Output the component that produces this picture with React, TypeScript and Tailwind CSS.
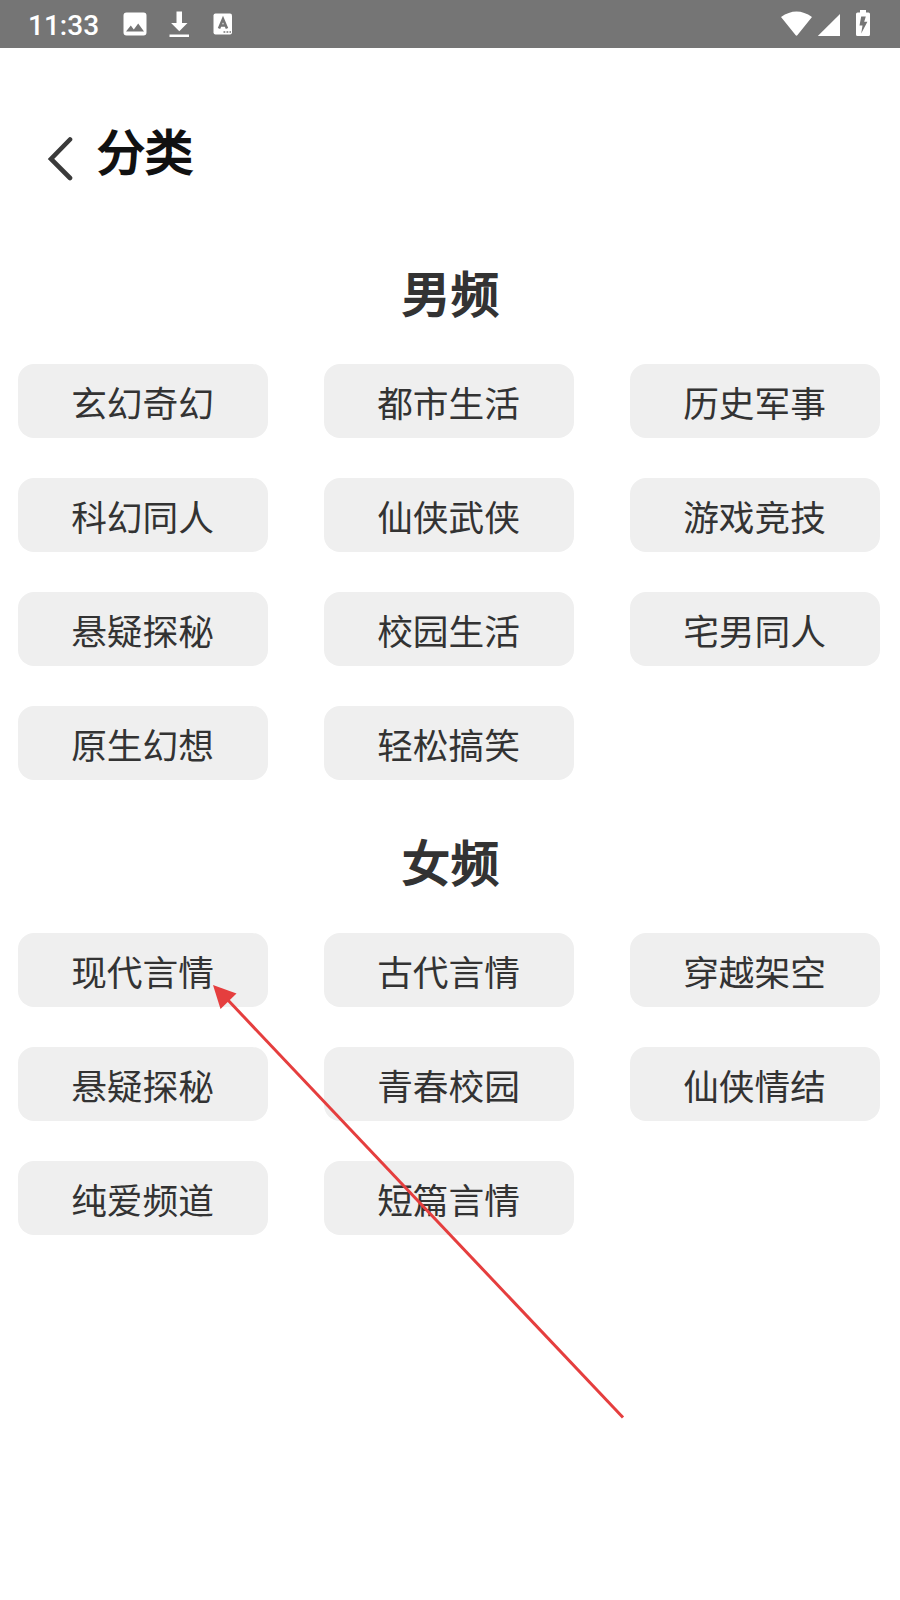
const channels = [
  {
    title: '男频',
    items: ['玄幻奇幻', '都市生活', '历史军事', '科幻同人', '仙侠武侠', '游戏竞技', '悬疑探秘', '校园生活', '宅男同人', '原生幻想', '轻松搞笑'],
  },
  {
    title: '女频',
    items: ['现代言情', '古代言情', '穿越架空', '悬疑探秘', '青春校园', '仙侠情结', '纯爱频道', '短篇言情'],
  },
];

function StatusBar() {
  return (
    <div className="flex h-12 items-center justify-between bg-[#757575] pl-7 text-white">
      <div className="flex items-center">
        <span className="w-[94px] pt-[3px] font-['Roboto'] text-[28px] leading-[46px] font-medium">11:33</span>
        <svg width="115" height="48" viewBox="122 0 115 48" fill="currentColor">
          <path fillRule="evenodd" d="M126.500 12.500h17a3 3 0 0 1 3 3v17a3 3 0 0 1-3 3h-17a3 3 0 0 1-3-3v-17a3 3 0 0 1 3-3zM126 31.500h18l-5.800-8-4.400 6-3-4z" />
          <path d="M176.500 11.500h5.500v11.500h5.500l-8.200 8.200-8.200-8.200h5.400zM169.500 34.500h19.500v2.500h-19.500z" />
          <rect x="213.500" y="13.500" width="18.500" height="21" rx="2" />
          <path d="M219 28.500l4-9.500 4 9.500M220.400 25.500h5.200" fill="none" stroke="#757575" strokeWidth="2.600" />
          <path d="M223.500 32h1.800M226.500 32h1.800M229.500 32h1.500" stroke="#757575" strokeWidth="1.600" />
        </svg>
      </div>
      <svg width="120" height="48" viewBox="780 0 120 48" fill="currentColor">
        <path d="M781 17q15.500-11 31 0L797.500 35q-1 1.300-2 0z" />
        <path d="M840 14v22h-22.200z" />
        <path fillRule="evenodd" d="M860 10h6v2.500h2.500q1.500 0 1.500 1.500v20.500q0 1.500-1.500 1.500h-11q-1.500 0-1.500-1.500v-20.500q0-1.500 1.500-1.500h2.500zM861.200 16.500l-1.700 9h3l-1.300 8 6.200-11.700h-3.200l1.600-5.300z" />
      </svg>
    </div>
  );
}

function ChannelSection({ title, items }: { title: string; items: string[] }) {
  return (
    <section className="mb-[39px]">
      <h2 className="h-[114px] pt-[5px] pl-[4px] text-center text-[48px] leading-[72px] font-normal tracking-[1px] [-webkit-text-stroke:2px_#333]">
        {title}
      </h2>
      <div className="grid grid-cols-3 gap-x-14 gap-y-10">
        {items.map((item) => (
          <button key={item} className="h-[74px] rounded-2xl bg-[#efefef] pt-px pr-px text-[35.7px] leading-[72px]">
            {item}
          </button>
        ))}
      </div>
    </section>
  );
}

export default function App() {
  return (
    <div className="relative h-[1600px] w-[900px] overflow-hidden bg-white font-['Noto_Sans_CJK_SC',sans-serif] text-[#333]">
      <StatusBar />
      <header className="flex h-[202px] items-start pt-[65px] pl-[47px]">
        <svg className="mt-[23px]" width="26" height="46" viewBox="0 0 26 46" fill="none" stroke="#3a3a3a" strokeWidth="4.600" strokeLinecap="round">
          <path d="M23 3.500L4 23l19 19" />
        </svg>
        <h1 className="ml-[24px] text-[48px] leading-[72px] font-normal text-[#111] [-webkit-text-stroke:2px_#111]">分类</h1>
      </header>
      <main className="pr-5 pl-[18px]">
        {channels.map((channel) => (
          <ChannelSection key={channel.title} title={channel.title} items={channel.items} />
        ))}
      </main>
      {/* pointer arrow over the grid */}
      <svg className="pointer-events-none absolute top-0 left-0" width="900" height="1600" fill="none">
        <path d="M226 998L623 1417.500" stroke="#e53e3e" strokeWidth="3" />
        <path d="M213 985l23.500 8.500-16 15.500z" fill="#e53e3e" />
      </svg>
    </div>
  );
}
